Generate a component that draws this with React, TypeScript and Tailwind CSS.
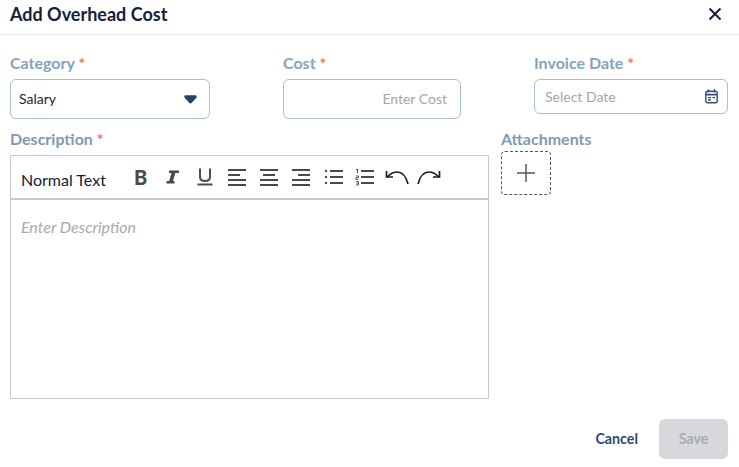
function Label({ text, required }: { text: string; required?: boolean }) {
  return (
    <div className="h-5 text-[16px] leading-5 font-bold text-[#85a2bf] whitespace-nowrap">
      {text}
      {required && <span className="text-[#ee7b45]"> *</span>}
    </div>
  );
}

function Line({ x1, y1, x2, y2, w = 2 }: { x1: number; y1: number; x2: number; y2: number; w?: number }) {
  return <line x1={x1} y1={y1} x2={x2} y2={y2} strokeWidth={w} />;
}

function AlignIcon({ rows }: { rows: [number, number][] }) {
  return (
    <svg width="19" height="19" viewBox="0 0 19 19" stroke="#4a4a4a" className="shrink-0">
      {rows.map(([a, b], i) => (
        <Line key={i} x1={a} y1={2 + i * 5} x2={b} y2={2 + i * 5} />
      ))}
    </svg>
  );
}

export default function App() {
  return (
    <div className="w-[739px] h-[467px] bg-white font-['Lato',sans-serif] flex flex-col overflow-hidden">
      <div className="h-[35px] shrink-0 border-b border-[#e9ebee] flex items-start justify-between pl-[10px] pr-[17px]">
        <h3 className="text-[18px] leading-[29px] font-bold text-[#14213a]">Add Overhead Cost</h3>
        <svg width="14" height="14" viewBox="0 0 14 14" className="mt-[7px]" stroke="#14213a" strokeWidth="2" fill="none">
          <path d="M1.5 1.5 L12.5 12.5 M12.5 1.5 L1.5 12.5" />
        </svg>
      </div>

      <div className="flex pl-[10px] pt-[18px] h-[94px] shrink-0">
        <div className="w-[200px] flex flex-col gap-[6px]">
          <Label text="Category" required />
          <div className="h-10 rounded-md border border-[#a9bdd0] flex items-center justify-between pl-2 pr-3">
            <span className="text-[14px] text-[#1c2536] -mt-[2px]">Salary</span>
            <svg width="13" height="9" viewBox="0 0 13 9" fill="#25406b">
              <path d="M0.3 1.5 Q0.3 0.3 1.5 0.3 H11.5 Q12.7 0.3 12.7 1.5 Q12.7 2.5 12 3.2 L7.8 7.8 Q6.5 9 5.2 7.8 L1 3.2 Q0.3 2.5 0.3 1.5 Z" />
            </svg>
          </div>
        </div>
        <div className="w-[178px] ml-[73px] flex flex-col gap-[6px]">
          <Label text="Cost" required />
          <div className="h-10 rounded-md border border-[#a9bdd0] flex items-center justify-end pr-[13px]">
            <span className="text-[14px] text-[#a3a6ad] -mt-[2px]">Enter Cost</span>
          </div>
        </div>
        <div className="w-[194px] ml-[73px] flex flex-col gap-[6px]">
          <Label text="Invoice Date" required />
          <div className="h-[35px] rounded-md border border-[#a9bdd0] flex items-center justify-between pl-[10px] pr-[9px]">
            <span className="text-[14px] text-[#a3a6ad] -mt-[1px]">Select Date</span>
            <svg width="13" height="15" viewBox="0 0 13 15" fill="none" stroke="#33507a" strokeWidth="1.4">
              <rect x="0.8" y="2.2" width="11.4" height="11.6" rx="1.8" />
              <path d="M3.5 0.3 V3.5 M9.5 0.3 V3.5" />
              <path d="M0.8 5.6 H12.2" strokeWidth="1.8" />
              <path d="M3 8.6 H6 M7.5 8.6 H10 M3 11 H6" />
            </svg>
          </div>
        </div>
      </div>

      <div className="flex pl-[10px] h-[270px] shrink-0">
        <div className="w-[479px] flex flex-col">
          <div className="h-5 text-[16px] leading-5 font-bold text-[#8398b5] whitespace-nowrap">
            Description<span className="text-[#ee7b45]"> *</span>
          </div>
          <div className="mt-[6px] h-[245px] border border-[#c9c9c9] flex flex-col">
            <div className="h-[44px] shrink-0 border-b-2 border-[#cbcbcb] flex items-center pl-[10px]">
              <span className="text-[16px] text-[#14213a] w-[113px] mt-[5px] whitespace-nowrap">Normal Text</span>
              <div className="flex items-center text-[#4a4a4a]">
                <span className="w-[32px] text-[20px] font-black leading-none -mt-[1px]">B</span>
                <span className="w-[31px]">
                  <svg width="13" height="14" viewBox="0 0 13 14" fill="#4a4a4a">
                    <path d="M3 0.5 H13 V3 L11.5 3 H9.3 L7 11 H8.5 V13.5 H0.5 V11 H3.2 L5.5 3 H3 Z" />
                  </svg>
                </span>
                <span className="w-[31px]">
                  <svg width="16" height="18" viewBox="0 0 16 18" fill="none" stroke="#4a4a4a" strokeWidth="2">
                    <path d="M3 0.5 V9 Q3 13 8 13 Q13 13 13 9 V0.5" />
                    <path d="M0.5 16.5 H15.5" />
                  </svg>
                </span>
                <div className="flex gap-[13px] items-center">
                  <AlignIcon rows={[[0, 18], [0, 12], [0, 18], [0, 18]]} />
                  <AlignIcon rows={[[0, 18], [3, 15], [0, 18], [0, 18]]} />
                  <AlignIcon rows={[[0, 18], [6, 18], [0, 18], [0, 18]]} />
                </div>
                <svg width="20" height="18" viewBox="0 0 20 18" className="ml-[13px]" stroke="#4a4a4a" fill="#4a4a4a">
                  <circle cx="2" cy="3" r="1.2" stroke="none" />
                  <circle cx="2" cy="9" r="1.2" stroke="none" />
                  <circle cx="2" cy="15" r="1.2" stroke="none" />
                  <Line x1={6} y1={3} x2={19} y2={3} />
                  <Line x1={6} y1={9} x2={19} y2={9} />
                  <Line x1={6} y1={15} x2={19} y2={15} />
                </svg>
                <svg width="20" height="18" viewBox="0 0 20 18" className="ml-[11px]" stroke="#4a4a4a" fill="#4a4a4a">
                  <Line x1={1} y1={1.5} x2={3} y2={1.5} w={1} />
                  <Line x1={2.5} y1={1} x2={2.5} y2={5} w={1} />
                  <path d="M0.8 8 H3.5 V9.7 H0.8 V11.5 H3.5" fill="none" strokeWidth="0.9" />
                  <path d="M0.8 13.5 H3.5 V17 H0.8 M1.5 15.2 H3.5" fill="none" strokeWidth="0.9" />
                  <Line x1={6} y1={3} x2={19} y2={3} />
                  <Line x1={6} y1={9} x2={19} y2={9} />
                  <Line x1={6} y1={15} x2={19} y2={15} />
                </svg>
                <svg width="24" height="15" viewBox="0 0 24 15" className="ml-[10px]" fill="none" stroke="#1a1a1a" strokeWidth="1.7">
                  <path d="M1.5 1 V7 H8" />
                  <path d="M2 7 Q7 2 12 2 Q20 2 23 14" />
                </svg>
                <svg width="24" height="15" viewBox="0 0 24 15" className="ml-[8px]" fill="none" stroke="#1a1a1a" strokeWidth="1.7">
                  <path d="M22.5 1 V7 H16" />
                  <path d="M22 7 Q17 2 12 2 Q4 2 1 14" />
                </svg>
              </div>
            </div>
            <div className="pl-[10px] pt-[17px] text-[16px] leading-5 italic text-[#a9a9a9]">Enter Description</div>
          </div>
        </div>
        <div className="ml-[12px] flex flex-col">
          <div className="h-5 text-[16px] leading-5 font-bold text-[#8398b5] whitespace-nowrap">Attachments</div>
          <div className="mt-[2px] w-[50px] h-11 rounded-sm border border-dashed border-[#555] flex items-center justify-center">
            <svg width="20" height="20" viewBox="0 0 20 20" stroke="#555" strokeWidth="1.5">
              <path d="M10 1 V19 M1 10 H19" />
            </svg>
          </div>
        </div>
      </div>

      <div className="flex justify-end items-center pr-[11px] pt-[20px]">
        <span className="text-[14.25px] font-bold text-[#2f4a75] mr-[21px]">Cancel</span>
        <div className="w-[69px] h-10 rounded-md bg-[#d6d8dc] flex items-center justify-center text-[14.25px] font-bold text-[#a6abb6]">Save</div>
      </div>
    </div>
  );
}
